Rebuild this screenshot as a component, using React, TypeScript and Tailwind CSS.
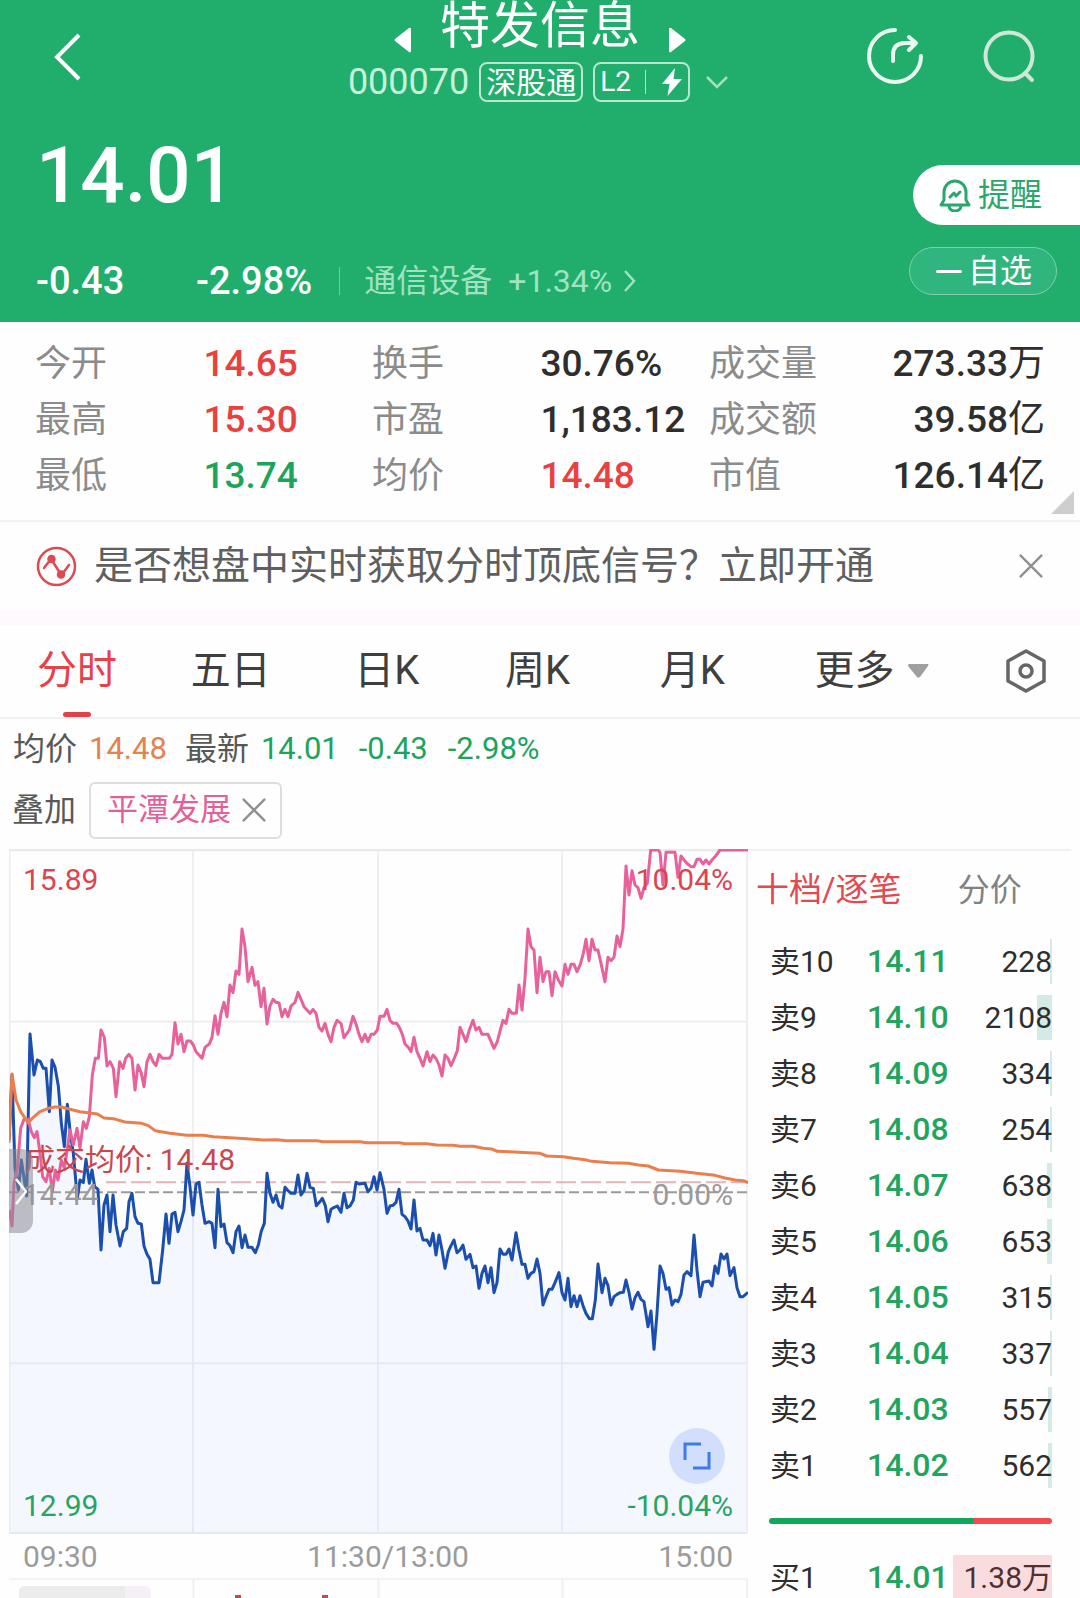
import { useState } from 'react'
import type { ReactNode } from 'react'
import { clsx } from 'clsx'

type Tone = 'up' | 'down' | 'flat'

const TONE: Record<Tone, string> = {
  up: 'text-[#e8413f]',
  down: 'text-[#1ca45c]',
  flat: 'text-[#2e2e2e]',
}

const STATS: { label: string; value: string; tone: Tone }[][] = [
  [
    { label: '今开', value: '14.65', tone: 'up' },
    { label: '换手', value: '30.76%', tone: 'flat' },
    { label: '成交量', value: '273.33万', tone: 'flat' },
  ],
  [
    { label: '最高', value: '15.30', tone: 'up' },
    { label: '市盈', value: '1,183.12', tone: 'flat' },
    { label: '成交额', value: '39.58亿', tone: 'flat' },
  ],
  [
    { label: '最低', value: '13.74', tone: 'down' },
    { label: '均价', value: '14.48', tone: 'up' },
    { label: '市值', value: '126.14亿', tone: 'flat' },
  ],
]

const TABS = ['分时', '五日', '日K', '周K', '月K']

const ASKS = [
  { label: '卖10', price: '14.11', volume: 228 },
  { label: '卖9', price: '14.10', volume: 2108 },
  { label: '卖8', price: '14.09', volume: 334 },
  { label: '卖7', price: '14.08', volume: 254 },
  { label: '卖6', price: '14.07', volume: 638 },
  { label: '卖5', price: '14.06', volume: 653 },
  { label: '卖4', price: '14.05', volume: 315 },
  { label: '卖3', price: '14.04', volume: 337 },
  { label: '卖2', price: '14.03', volume: 557 },
  { label: '卖1', price: '14.02', volume: 562 },
]

// lots per pixel of depth bar
const DEPTH_SCALE = 140

// Chart space: x 27..2244, y 27..2079
const OVERLAY_LINE =
  '28,1110 36,1158 42,1030 52,985 62,865 72,838 84,838 94,875 103,893 111,875 120,940 128,1010 138,1025 148,985 157,1055 166,990 174,1020 184,960 193,985 203,920 210,870 220,915 231,865 240,925 250,845 259,865 268,830 277,705 286,655 295,655 303,570 313,592 321,678 330,665 340,685 348,770 359,665 369,685 377,655 387,643 396,655 405,750 414,675 424,700 432,740 441,665 450,643 459,665 468,677 477,643 487,655 508,655 516,643 525,548 534,612 543,583 552,635 561,603 571,603 580,615 588,635 606,655 615,622 628,612 636,592 645,527 654,583 663,520 672,487 681,530 690,435 699,458 708,393 717,403 726,267 735,320 744,425 756,382 765,436 774,425 783,500 792,445 801,552 810,498 819,478 828,487 837,489 846,530 855,508 864,530 873,498 885,487 894,457 903,478 912,500 930,520 939,508 948,520 957,562 966,573 975,550 984,583 993,605 1002,562 1011,541 1023,550 1032,593 1048,570 1059,529 1068,552 1077,583 1086,605 1095,583 1104,605 1113,583 1122,583 1132,570 1140,529 1152,529 1161,508 1170,541 1179,550 1190,550 1198,562 1207,583 1215,612 1225,622 1233,635 1242,592 1251,635 1260,655 1269,678 1281,635 1290,665 1299,645 1309,657 1317,675 1326,708 1335,645 1344,655 1353,677 1362,657 1372,632 1380,562 1389,583 1398,605 1408,570 1419,541 1428,570 1437,562 1446,583 1464,583 1482,625 1492,605 1500,573 1509,541 1518,550 1527,508 1536,520 1549,520 1557,435 1566,510 1575,415 1584,267 1593,320 1602,330 1611,458 1620,352 1629,425 1638,395 1647,395 1656,467 1665,395 1675,420 1686,438 1695,373 1704,403 1713,373 1722,373 1731,395 1741,373 1750,340 1758,298 1767,362 1776,298 1785,330 1794,330 1803,370 1815,425 1824,352 1833,362 1842,352 1851,288 1860,320 1869,267 1878,78 1887,165 1896,92 1905,135 1914,143 1923,175 1932,143 1942,130 1952,30 1974,30 1980,37 1989,135 1998,37 2025,37 2034,112 2043,48 2052,60 2063,72 2073,80 2082,80 2091,58 2100,58 2109,72 2118,60 2127,72 2136,60 2147,48 2160,30 2244,30'

const AVERAGE_LINE =
  '27,908 36,702 48,780 62,815 84,848 100,832 120,815 145,805 165,801 185,801 210,808 240,815 275,820 292,822 312,834 340,836 375,846 425,850 445,857 465,872 510,880 560,886 610,886 640,890 690,893 740,896 790,900 830,899 860,902 950,902 970,905 1080,905 1100,908 1198,908 1215,911 1280,911 1310,915 1360,916 1380,919 1420,919 1450,925 1475,927 1492,934 1530,935 1585,938 1620,940 1640,948 1690,950 1720,955 1755,959 1775,964 1830,968 1885,970 1915,975 1945,978 1975,990 2040,994 2090,1000 2145,1006 2175,1014 2205,1020 2230,1022 2244,1028'

const PRICE_LINE =
  '27,900 36,705 45,985 55,1050 64,960 80,1068 84,860 90,582 102,705 112,660 121,665 130,685 138,685 148,815 156,660 165,682 175,738 184,850 193,920 202,793 211,880 220,940 232,1075 240,1020 250,1028 258,958 268,1030 276,990 284,1040 294,1048 303,1230 312,1095 321,1065 330,1175 339,1065 348,1155 360,1218 370,1175 380,1165 387,1085 396,1060 405,1130 414,1150 424,1152 432,1218 441,1243 450,1258 459,1328 477,1328 488,1230 498,1122 507,1210 516,1122 525,1117 534,1175 543,1145 552,1110 561,970 570,1040 579,1125 588,1032 597,1027 606,1095 615,1150 627,1145 636,1150 645,1223 654,1048 663,1160 672,1152 681,1208 690,1217 699,1238 708,1175 717,1158 726,1223 735,1185 744,1222 756,1222 766,1238 775,1215 784,1173 793,1150 801,1000 810,1060 819,1087 828,1065 837,1097 846,1104 855,1042 864,1052 873,1060 885,1060 894,1005 903,1065 912,1052 921,1000 930,1042 940,1045 949,1097 958,1087 967,1075 976,1097 984,1145 993,1108 1003,1102 1012,1098 1023,1117 1032,1060 1041,1103 1050,1098 1060,1080 1068,1027 1077,1032 1095,1030 1104,1055 1113,1045 1122,1010 1131,1050 1140,998 1152,1048 1161,1120 1170,1098 1179,1096 1188,1087 1197,1048 1206,1123 1215,1130 1224,1143 1233,1167 1242,1080 1251,1173 1260,1165 1269,1200 1281,1200 1290,1217 1299,1180 1308,1245 1317,1185 1326,1230 1335,1285 1345,1235 1353,1217 1362,1200 1371,1238 1380,1230 1389,1215 1398,1258 1410,1243 1419,1283 1428,1278 1437,1345 1446,1300 1455,1278 1464,1328 1473,1283 1482,1358 1491,1328 1500,1227 1509,1243 1518,1243 1527,1227 1536,1260 1548,1178 1557,1230 1566,1273 1575,1273 1584,1315 1593,1300 1602,1295 1611,1257 1620,1300 1629,1395 1638,1370 1647,1348 1656,1348 1665,1328 1677,1298 1686,1358 1695,1380 1704,1315 1713,1400 1722,1367 1731,1400 1740,1367 1750,1400 1758,1420 1768,1436 1777,1436 1786,1380 1794,1272 1806,1358 1815,1315 1824,1337 1833,1395 1842,1370 1851,1363 1860,1358 1870,1357 1878,1320 1887,1357 1896,1407 1905,1373 1914,1357 1923,1378 1932,1385 1944,1460 1953,1413 1962,1528 1971,1420 1980,1278 1989,1300 1998,1348 2007,1343 2016,1395 2025,1380 2034,1385 2043,1363 2052,1305 2061,1295 2073,1307 2082,1185 2091,1290 2100,1370 2109,1327 2127,1323 2136,1338 2145,1278 2154,1300 2163,1242 2172,1257 2181,1242 2190,1307 2202,1283 2211,1343 2220,1370 2229,1370 2244,1357'

export default function App() {
  return (
    <div className="h-screen overflow-hidden bg-[#fefefe] font-[Roboto,'Noto_Sans_CJK_SC',sans-serif] text-[#2e2e2e]">
      <Header />
      <Stats />
      <SignalBanner />
      <PeriodTabs />
      <Legend />
      <main className="grid grid-cols-[748fr_332fr]">
        <IntradayChart />
        <OrderBook />
      </main>
    </div>
  )
}

function Header() {
  return (
    <header className="bg-[#21ad6c] text-white">
      <div className="grid grid-cols-[1fr_auto_1fr]">
        <button aria-label="返回" className="ml-[53px] mt-8 self-start justify-self-start">
          <svg width="30" height="50" viewBox="0 0 30 50" fill="none" stroke="currentColor" strokeWidth="4">
            <path d="M26 3 4 25l22 22" />
          </svg>
        </button>

        <div className="flex flex-col items-center">
          <div className="flex h-[53px] gap-[28px]">
            <button aria-label="上一只" className="self-end">
              <svg width="18" height="26" viewBox="0 0 18 26" fill="currentColor">
                <path d="M17 2v22q0 2-2 1L1 14q-1-1 0-2L15 1q2-1 2 1Z" />
              </svg>
            </button>
            <h1 className="text-[50px] leading-[52px]">特发信息</h1>
            <button aria-label="下一只" className="self-end">
              <svg width="18" height="26" viewBox="0 0 18 26" fill="currentColor">
                <path d="M1 2v22q0 2 2 1l14-11q1-1 0-2L3 1Q1 0 1 2Z" />
              </svg>
            </button>
          </div>
          <div className="mt-[9px] flex h-10 items-center pr-1">
            <span className="text-[36px] text-[#c5f3da]">000070</span>
            <span className="ml-[10px] flex h-10 items-center rounded-lg border-2 border-[#b8e6cf] px-[5px] text-[30px]">
              深股通
            </span>
            <span className="ml-[10px] flex h-10 items-center rounded-lg border-2 border-[#b8e6cf] pl-[5px] pr-[6px] text-[28px]">
              L2
              <span className="ml-[14px] h-6 w-px bg-[#b8e6cf]" />
              <svg className="ml-4" width="20" height="28" viewBox="0 0 20 28" fill="currentColor">
                <path d="M13 0 0 16h7.500L5.500 28 20 11h-8.500Z" />
              </svg>
            </span>
            <button aria-label="展开" className="ml-4">
              <svg width="22" height="14" viewBox="0 0 22 14" fill="none" stroke="#a5dfc2" strokeWidth="2.500">
                <path d="m1 2 10 10L21 2" />
              </svg>
            </button>
          </div>
        </div>

        <div className="flex items-start gap-14 justify-self-end pr-[43px] pt-[26px]">
          <button aria-label="分享">
            <svg width="60" height="60" viewBox="0 0 60 60" fill="none" stroke="#e9fbf1" strokeWidth="4" strokeLinecap="round" strokeLinejoin="round">
              <path d="M30 4A26 26 0 1 0 56 30" />
              <path d="M28 35v-6q0-12 12-12h9" />
              <path d="m44 11 7 6-7 7" />
            </svg>
          </button>
          <button aria-label="搜索">
            <svg width="56" height="60" viewBox="0 0 56 60" fill="none" stroke="#cfe6d8" strokeWidth="4" strokeLinecap="round">
              <circle cx="28" cy="30" r="23.500" />
              <path d="m44 47 7 7" />
            </svg>
          </button>
        </div>
      </div>

      <div className="flex justify-between pb-[21px]">
        <div className="pl-[36px] pt-[34px]">
          <p className="text-[78px] font-medium leading-[80px]">14.01</p>
          <div className="mt-[45px] flex h-10 items-center text-[38px] font-medium">
            <span className="w-40">-0.43</span>
            <span>-2.98%</span>
            <span className="ml-[27px] h-7 w-px bg-[#6fcb9f]" />
            <a href="#sector" className="ml-6 flex items-center text-[32px] font-normal text-[#a0e2c1]">
              通信设备
              <span className="ml-4">+1.34%</span>
              <svg className="ml-3" width="12" height="24" viewBox="0 0 12 24" fill="none" stroke="currentColor" strokeWidth="2.500">
                <path d="m1 2 9 10-9 10" />
              </svg>
            </a>
          </div>
        </div>

        <div className="flex flex-col items-end pt-[63px]">
          <button className="flex h-[60px] items-center gap-[7px] rounded-l-full bg-white pl-[26px] pr-[38px] text-[32px] text-[#2aa76c]">
            <BellIcon />
            提醒
          </button>
          <button className="mr-[23px] mt-[22px] flex h-12 items-center gap-[6px] rounded-full border border-[#7fd0a7] bg-[#30b57e] pl-[26px] pr-6 text-[32px]">
            <span className="h-[3px] w-[26px] rounded-full bg-white" />
            自选
          </button>
        </div>
      </div>
    </header>
  )
}

function BellIcon() {
  return (
    <svg width="32" height="33" viewBox="0 0 32 33" fill="none" stroke="currentColor" strokeWidth="3" strokeLinecap="round" strokeLinejoin="round">
      <path d="M5 21v-8a11 11 0 0 1 22 0v8l3 5H2Z" />
      <path d="M10 27a6 5 0 0 0 12 0" />
      <path d="m11 18 4-4 2 3 4-4" />
    </svg>
  )
}

function Stats() {
  return (
    <section className="relative border-b-2 border-[#f3f3f3] px-[35px] pb-[16px] pt-[14px]">
      <dl>
        {STATS.map((row) => (
          <div key={row[0].label} className="grid h-14 grid-cols-[337fr_337fr_336fr] items-center text-[36px] leading-14">
            {row.map((item, i) => (
              <div key={item.label} className={clsx('flex whitespace-nowrap', i === 2 && 'justify-between')}>
                <dt className={clsx('text-[#8b8b8b]', i < 2 && 'w-1/2')}>{item.label}</dt>
                <dd className={clsx('text-[37px] font-medium', TONE[item.tone])}>
                  <Amount value={item.value} />
                </dd>
              </div>
            ))}
          </div>
        ))}
      </dl>
      <svg className="absolute bottom-[6px] right-[6px]" width="23" height="23" viewBox="0 0 23 23">
        <path d="M23 0v23H0Z" fill="#cecece" />
      </svg>
    </section>
  )
}

// The unit character is set lighter than the digits
function Amount({ value }: { value: string }) {
  const unit = value.match(/[万亿]$/)?.[0]
  if (!unit) return <>{value}</>
  return (
    <>
      {value.slice(0, -1)}
      <span className="font-normal">{unit}</span>
    </>
  )
}

function SignalBanner() {
  return (
    <section className="border-b-[15px] border-[#fdf9fd]">
      <div className="flex h-[88px] items-center pl-[36px] pr-[37px]">
        <svg width="41" height="41" viewBox="0 0 41 41" fill="none" stroke="#dc4a52" strokeWidth="2.500" strokeLinecap="round">
          <circle cx="20.500" cy="20.500" r="18.500" />
          <path d="m8 22 7-9M17 16l7 11M27 27l6-8" />
          <circle cx="15.500" cy="13" r="3" fill="#e34850" />
          <circle cx="25" cy="28.500" r="3" fill="#e34850" />
        </svg>
        <a href="#signal" className="ml-[17px] whitespace-nowrap text-[39px] leading-[56px] text-[#5f5f5f]">
          是否想盘中实时获取分时顶底信号？立即开通
        </a>
        <button aria-label="关闭" className="ml-auto">
          <CrossIcon />
        </button>
      </div>
    </section>
  )
}

function CrossIcon() {
  return (
    <svg width="24" height="24" viewBox="0 0 26 26" fill="none" stroke="#8f8f8f" strokeWidth="2.500">
      <path d="m1 1 24 24M25 1 1 25" />
    </svg>
  )
}

function PeriodTabs() {
  const [active, setActive] = useState('分时')

  return (
    <nav className="grid h-[94px] grid-cols-[154fr_164fr_151fr_155fr_155fr_191fr_40fr] border-b-2 border-[#f1f1f1] pl-[37px] pr-[33px] text-[40px] text-[#3f3f3f]">
      {TABS.map((tab) => (
        <button
          key={tab}
          onClick={() => setActive(tab)}
          className={clsx('relative justify-self-start whitespace-nowrap', active === tab && 'text-[#e8414a]')}
        >
          {tab}
          {active === tab && (
            <span className="absolute bottom-0 left-1/2 h-[5px] w-7 -translate-x-1/2 rounded-sm bg-[#e3414a]" />
          )}
        </button>
      ))}
      <button className="flex items-center gap-[14px] whitespace-nowrap">
        更多
        <svg width="21" height="14" viewBox="0 0 21 14" fill="#a09ea0">
          <path d="M1 0h19q1 0 0 2L12 13q-2 1-3 0L0 2Q0 0 1 0Z" />
        </svg>
      </button>
      <button aria-label="设置">
        <svg width="42" height="46" viewBox="0 0 42 46" fill="none" stroke="#666" strokeWidth="3.500" strokeLinejoin="round">
          <path d="m21 3 18 10v20L21 43 3 33V13Z" />
          <circle cx="21" cy="23" r="6" />
        </svg>
      </button>
    </nav>
  )
}

function Legend() {
  return (
    <section className="text-[32px] text-[#585858]">
      <div className="flex h-[60px] items-center pl-[13px]">
        均价
        <span className="ml-3 text-[31px] text-[#e18450]">14.48</span>
        <span className="ml-[18px]">最新</span>
        <span className="ml-3 text-[31px] text-[#1ca45c]">14.01</span>
        <span className="ml-[20px] text-[31px] text-[#1ca45c]">-0.43</span>
        <span className="ml-[20px] text-[31px] text-[#1ca45c]">-2.98%</span>
      </div>
      <div className="flex h-[70px] items-center pb-[8px] pl-3">
        叠加
        <span className="ml-[13px] flex h-[57px] items-center gap-[11px] rounded-md border-2 border-[#dedede] pl-4 pr-[14px] text-[31px] text-[#e35f98]">
          平潭发展
          <button aria-label="移除叠加">
            <CrossIcon />
          </button>
        </span>
      </div>
    </section>
  )
}

function IntradayChart() {
  return (
    <section className="pl-[9px]">
      <div className="relative text-[30px] leading-9">
        <svg className="block w-full" viewBox="27 27 2217 2055" fill="none">
          <polygon points={`27,2079 ${PRICE_LINE} 2244,2079`} fill="#f5f7fe" />
          <g stroke="#ececf0" strokeWidth="5">
            <path d="M27 545H2241M579 30V1100M1134 30V1100M1686 30V1200M29 30V2079M2241 30V2079" />
            <path d="M27 30H2241" stroke="#eaeaea" strokeWidth="8" />
          </g>
          <path d="M27 1570H2241M579 1100V2079M1134 1100V2079M1686 1200V2079M27 2079H2241" stroke="#e4e9f4" strokeWidth="6" />
          <path d="M318 1027H2241" stroke="#dfb5ba" strokeWidth="6" strokeDasharray="60 15" />
          <path d="M27 1057H2244" stroke="#9b9b9b" strokeWidth="6" strokeDasharray="30 12" />
          <g strokeWidth="9" strokeLinejoin="round">
            <polyline points={PRICE_LINE} stroke="#1a4fae" />
            <polyline points={OVERLAY_LINE} stroke="#e7629a" />
            <polyline points={AVERAGE_LINE} stroke="#e87f4c" />
          </g>
        </svg>

        <span className="absolute left-[14px] top-[13px] text-[#dc4450]">15.89</span>
        <span className="absolute right-[15px] top-[13px] text-[#dc4450]">10.04%</span>
        <span className="absolute left-4 top-[293px] text-[#c9474f]">成交均价: 14.48</span>
        <span className="absolute left-[14px] top-[328px] text-[#9a9a9a]">14.44</span>
        <span className="absolute right-[15px] top-[328px] text-[#9a9a9a]">0.00%</span>
        <span className="absolute bottom-[10px] left-[14px] text-[#27a463]">12.99</span>
        <span className="absolute bottom-[10px] right-[15px] text-[#27a463]">-10.04%</span>

        <button aria-label="展开侧栏" className="absolute left-0 top-[300px] flex h-[84px] w-6 items-center justify-center rounded-r-xl bg-[#8c8c96]/55">
          <svg width="12" height="27" viewBox="0 0 12 27" fill="none" stroke="#fff" strokeWidth="2.500">
            <path d="m1 1 10 12.500L1 26" />
          </svg>
        </button>
        <button aria-label="全屏" className="absolute bottom-[50px] right-[23px] flex h-14 w-14 items-center justify-center rounded-full bg-[#d2dffc]">
          <svg width="28" height="28" viewBox="0 0 28 28" fill="none" stroke="#3f7be6" strokeWidth="3">
            <path d="M2 18V2h16M26 10v16H10" />
          </svg>
        </button>
      </div>

      <div className="grid h-[46px] grid-cols-[1fr_auto_1fr] items-center border-b-2 border-[#f3f1f3] pl-[14px] pr-[15px] text-[30px] text-[#9b9b9b]">
        <span>09:30</span>
        <span className="pl-5">11:30/13:00</span>
        <span className="text-right">15:00</span>
      </div>
      <svg className="block w-full" viewBox="0 0 739 24" fill="none">
        <path d="M184.500 0v24M369.500 0v24M553.500 0v24M738 0v24" stroke="#f2eff2" strokeWidth="2" />
        <rect x="10" y="6" width="132" height="40" rx="6" fill="#f5f0f5" />
        <path d="M16 6h100v18H10V12q0-6 6-6Z" fill="#ececec" />
        <path d="M226 15h6v9h-6zM313 15h6v9h-6z" fill="#cb4650" />
      </svg>
    </section>
  )
}

function OrderBook() {
  return (
    <section className="pr-[28px]">
      <div className="-mr-[19px] flex h-[84px] items-center border-t-2 border-[#f1f1f1] pb-1 pl-2 text-[33px]">
        <button className="text-[#e04a50]">十档/逐笔</button>
        <button className="ml-[56px] text-[32px] text-[#828282]">分价</button>
      </div>
      <div className="pl-[21px]">
        <table className="w-full table-fixed text-[30px]">
          <tbody>
            {ASKS.map((ask) => (
              <BookRow key={ask.label} label={ask.label} price={ask.price} depth={ask.volume} barClass="bg-[#d3ebe4]">
                {ask.volume}
              </BookRow>
            ))}
            <tr className="h-14">
              <td colSpan={3}>
                <div className="flex h-[6px] overflow-hidden rounded-full">
                  <span className="flex-[205] bg-[#12a85c]" />
                  <span className="flex-[78] bg-[#f54a4e]" />
                </div>
              </td>
            </tr>
            <BookRow label="买1" price="14.01" depth={13800} barClass="bg-[#fadcde]">
              <span className="text-[#503030]">1.38万</span>
            </BookRow>
          </tbody>
        </table>
      </div>
    </section>
  )
}

function BookRow({
  label,
  price,
  depth,
  barClass,
  children,
}: {
  label: string
  price: string
  depth: number
  barClass: string
  children: ReactNode
}) {
  return (
    <tr className="h-14 whitespace-nowrap">
      <th scope="row" className="w-[98px] pl-px text-left font-normal">{label}</th>
      <td className="w-[86px] text-[32px] font-medium text-[#1fa55e]">{price}</td>
      <td className="text-right">
        <div className="relative h-[45px] leading-[45px]">
          <span
            className={clsx('absolute inset-y-0 right-0', barClass)}
            style={{ width: Math.round(depth / DEPTH_SCALE) }}
          />
          <span className="relative">{children}</span>
        </div>
      </td>
    </tr>
  )
}
